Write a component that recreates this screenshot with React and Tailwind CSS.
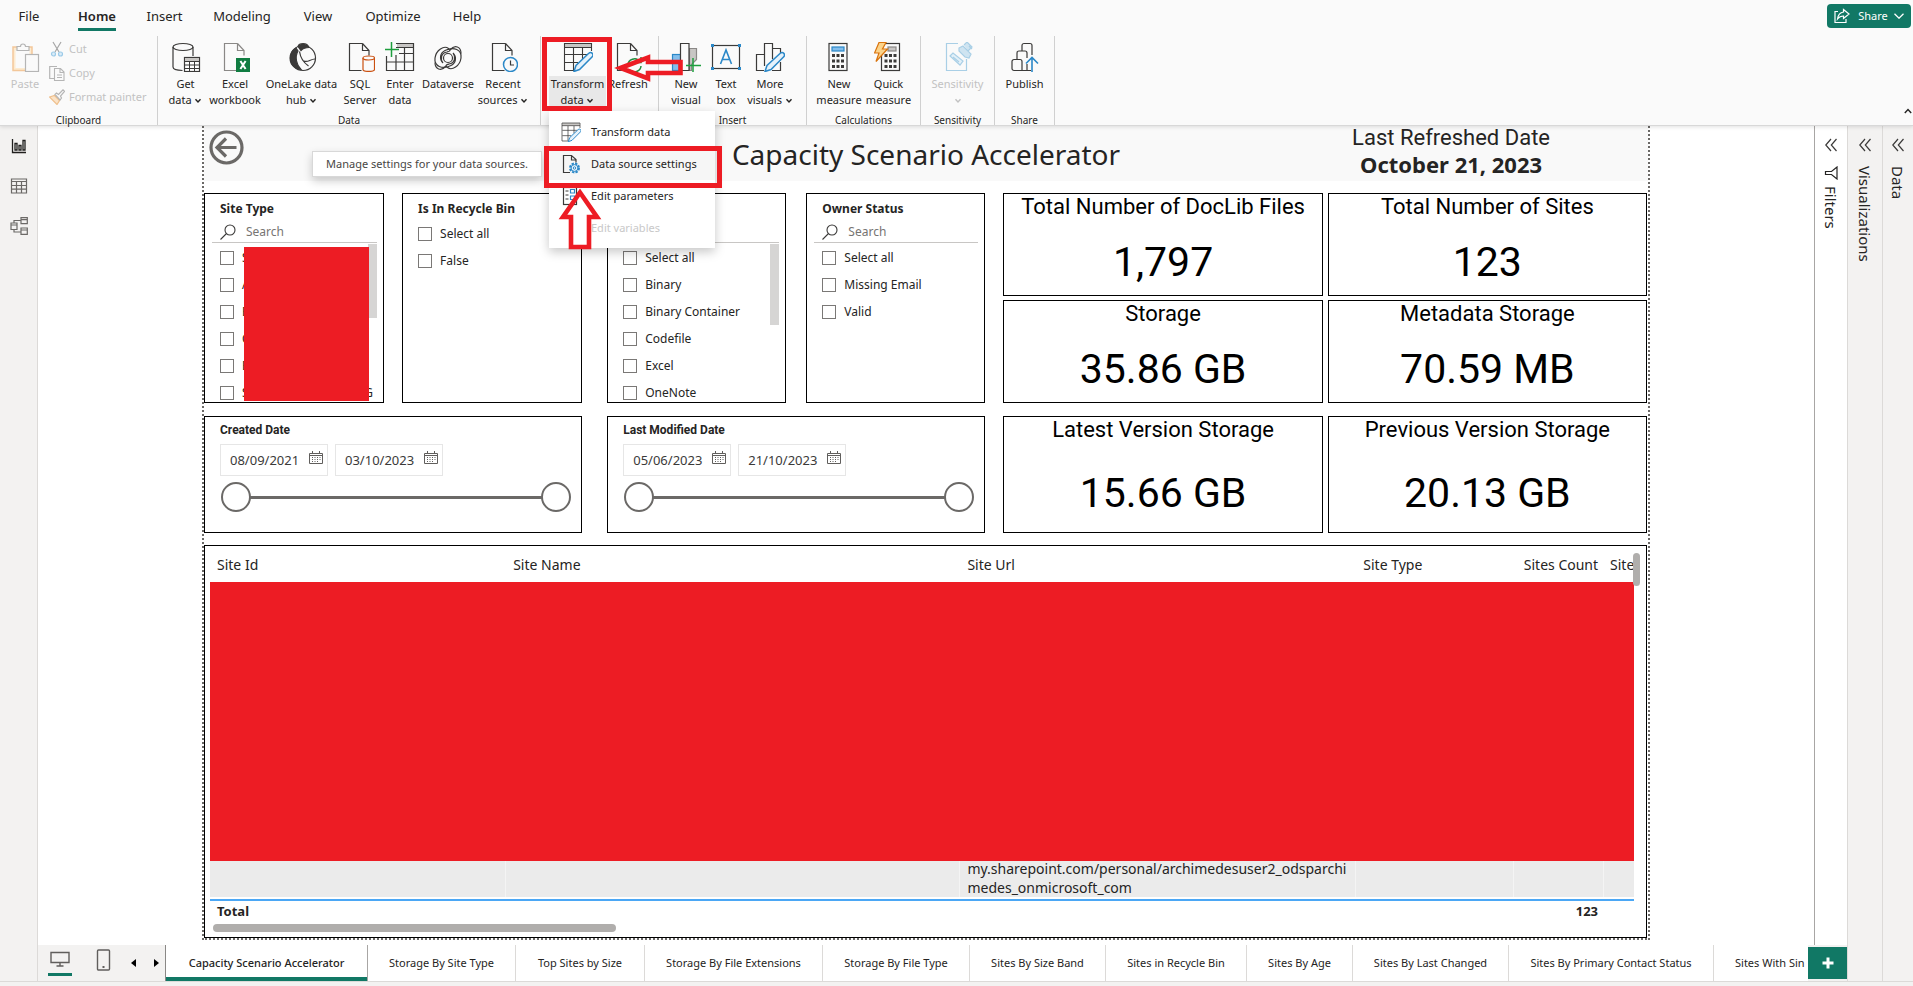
import React from 'react';

const ui = "font-['Noto_Sans','Open_Sans',sans-serif]";
const din = "font-['Roboto','Inter',sans-serif]";

/* ---------- ribbon icons, drawn on a 30 x 30 grid ---------- */

function Icon({ children, size = 'size-[30px]', box = '0 0 30 30' }) {
  return (
    <svg className={`${size} shrink-0`} viewBox={box} fill="none" stroke="#3b3a39" strokeWidth="1.2" aria-hidden="true">
      {children}
    </svg>
  );
}

const DocShape = ({ stroke = '#3b3a39' }) => (
  <path d="M17.5 1.5H4.5v27h12M17.5 1.5l6.500 7v5M17.5 1.500v7h6.500" stroke={stroke} />
);

const PasteIcon = () => (
  <Icon>
    <rect x="3" y="5" width="19" height="23.500" fill="#fdebd0" stroke="#f3c79a" strokeWidth="1.500" />
    <rect x="5.500" y="8" width="14" height="18" fill="#fafafa" stroke="none" />
    <path d="M7 8.500V4.500h3.500a2.500 2.500 0 0 1 5 0H19v4z" stroke="#b5b5b5" fill="#fafafa" />
    <rect x="15.500" y="12.500" width="13" height="17" stroke="#b5b5b5" fill="#fafafa" />
  </Icon>
);
const CutIcon = () => (
  <Icon size="size-4" box="0 0 16 16">
    <path d="M4 1l6 10M12 1L6 11" stroke="#a6a6a6" />
    <circle cx="4.500" cy="13" r="2" stroke="#9ccbe8" fill="#dcecf7" />
    <circle cx="11.500" cy="13" r="2" stroke="#9ccbe8" fill="#dcecf7" />
  </Icon>
);
const CopyIcon = () => (
  <Icon size="size-4" box="0 0 16 16">
    <path d="M5 13.500H.700V1.500H8" stroke="#b5b5b5" />
    <path d="M5.500 3.500h6l3.500 3.500v8.500H5.500zM11 3.500v4h4M8 10h5M8 12.500h5" stroke="#b5b5b5" strokeWidth="1.100" />
  </Icon>
);
const PainterIcon = () => (
  <Icon size="size-4" box="0 0 16 16">
    <path d="M.500 8l5-1.500 5 5L8 15.500z" fill="#fbe3c7" stroke="#efc08d" />
    <path d="M6 5.500l1.500-1.500 2 1.500L14 .800l1.500 1.500L11.500 7l1 2-1.500 2z" stroke="#b5b5b5" fill="#fafafa" />
  </Icon>
);
const GetDataIcon = () => (
  <Icon>
    <ellipse cx="12" cy="5" rx="10" ry="3.500" />
    <path d="M2 5v20c0 1.800 3.500 3.300 9.500 3.500M22 5v9" />
    <rect x="13.500" y="15.500" width="15" height="14" fill="#fff" />
    <path d="M13.500 19.500h15M13.500 23h15M13.500 26.500h15M18.500 19v10.500M23.500 19v10.500" strokeWidth="1" />
    <rect x="14" y="16" width="14" height="3" fill="#c8c6c4" stroke="none" />
  </Icon>
);
const ExcelIcon = () => (
  <Icon>
    <DocShape stroke="#8a8886" />
    <rect x="16" y="16" width="14" height="14" fill="#107c41" stroke="none" />
    <path d="M20.400 19l5.200 8M25.600 19l-5.200 8" stroke="#fff" strokeWidth="2" />
  </Icon>
);
const OneLakeIcon = () => (
  <Icon>
    <circle cx="16" cy="16" r="12.500" />
    <path d="M11 4.500c1-3.500 9-4.500 11 1-3 0-6 1-8 3z" fill="#3b3a39" />
    <path d="M9 6c-8 5-7.500 15-1 19.500 2 1.500 4 2 6 2C9.500 23 7.500 15 11 9z" fill="#3b3a39" />
    <path d="M12.500 9.500c1 7 4 11 9 14.500M17 19c4 2 6-2 11-2" />
  </Icon>
);
const SqlIcon = () => (
  <Icon>
    <DocShape />
    <g stroke="#ca5010">
      <path d="M18 16v11.500c0 2.600 11.500 2.600 11.500 0V16" fill="#fafafa" />
      <ellipse cx="23.750" cy="16" rx="5.750" ry="2" fill="#fafafa" />
    </g>
  </Icon>
);
const EnterDataIcon = () => (
  <Icon>
    <rect x="12" y="1.500" width="16" height="4" fill="#c8c6c4" stroke="none" />
    <path d="M11 1.500h17.500v27h-27V14M28.500 5.500H11M14 11.500h14M2 20h26M11 13v15M19.500 6v22" />
    <path d="M6.500 0v15M0 7.500h14" stroke="#1e9e3e" strokeWidth="1.500" />
  </Icon>
);
const DataverseIcon = () => (
  <Icon>
    <circle cx="15" cy="16" r="4.500" />
    <path d="M20 11c4 4 3 10-2 12.500C9 28 1 24 2 16 3 8 11 3 15.500 6.500c3 2.500.500 3-1.500 3.500-6 1-7 7-4 11M10 21c-4-4-3-10 2-12.500C21 4 29 8 28 16c-1 8-9 13-13.500 9.500-3-2.500-.500-3 1.500-3.500 6-1 7-7 4-11" />
    <path d="M17 8C22 2 28 5 28 11.500M13 24C8 30 2 27 2 20.500" />
  </Icon>
);
const RecentIcon = () => (
  <Icon>
    <DocShape />
    <circle cx="22.500" cy="22.500" r="7" stroke="#2b88c8" fill="#fafafa" strokeWidth="1.500" />
    <path d="M22.500 18.500V23H26" stroke="#3b3a39" />
  </Icon>
);
const TransformIcon = ({ size }) => (
  <Icon size={size}>
    <rect x="2" y="1.500" width="26" height="4" fill="#c8c6c4" stroke="none" />
    <path d="M12 28.500H1.500v-27h27V9M1.500 5.500h27M2 12.500h22M2 20.500h13M10.500 6v22M19.500 6v11" strokeWidth="1.100" />
    <path d="M11 29.500l2-6L25.500 11.500c3-2.500 6 1 3.500 3.500L16.500 27.500z" fill="#e6f2fb" stroke="#2b88c8" strokeWidth="1.500" />
  </Icon>
);
const RefreshIcon = () => (
  <Icon>
    <DocShape />
    <path d="M15 24a6.500 6.500 0 0 1 12-4M28 15v5.500h-5.500M28 24a6.500 6.500 0 0 1-11 4" stroke="#1e8e3e" strokeWidth="1.500" />
  </Icon>
);
const NewVisualIcon = () => (
  <Icon>
    <rect x="1.500" y="12.500" width="8" height="16" fill="#83beec" stroke="#2b88c8" />
    <path d="M18.500 6.500h7v11l-5 5v6h-2z" fill="#c8c6c4" stroke="#8a8886" />
    <path d="M9.500 28.500v-27h8.500v27z" fill="#fafafa" />
    <path d="M22 16v14M15 23.500h15" stroke="#1e9e3e" strokeWidth="1.500" />
  </Icon>
);
const TextBoxIcon = () => (
  <Icon>
    <rect x="1.500" y="3.500" width="27" height="23" />
    <path d="M9.500 22L15 8l5.500 14M11.300 17.500h7.400" stroke="#2b88c8" strokeWidth="1.600" />
    <g fill="#2b88c8" stroke="none">
      <rect x="0" y="2" width="3" height="3" />
      <rect x="27" y="2" width="3" height="3" />
      <rect x="0" y="25" width="3" height="3" />
      <rect x="27" y="25" width="3" height="3" />
    </g>
  </Icon>
);
const MoreVisualsIcon = () => (
  <Icon>
    <path d="M9 28.500H1.500V12.500h8M9.500 24V1.500h8V17M18 6.500h7.500V11M17 28.500h8.500V20" />
    <path d="M10 29.500l2-6L25 11.500c3-2.500 6 1 3.500 3.500L16 27.500z" fill="#e6f2fb" stroke="#2b88c8" strokeWidth="1.500" />
  </Icon>
);
const Keypad = ({ x }) => (
  <g>
    <rect x={x} y="1.500" width="18" height="27" />
    {[12, 17.500, 23].map((y) =>
      [3, 7.500, 12].map((dx) => <rect key={`${y}-${dx}`} x={x + dx} y={y} width="3" height="3" fill="#3b3a39" stroke="none" />)
    )}
  </g>
);
const NewMeasureIcon = () => (
  <Icon>
    <Keypad x={5} />
    <rect x="8" y="5" width="12" height="4" fill="#83beec" stroke="#2b88c8" />
  </Icon>
);
const QuickMeasureIcon = () => (
  <Icon>
    <Keypad x={7.500} />
    <rect x="14" y="5" width="8" height="4" fill="#c8c6c4" stroke="#8a8886" />
    <path d="M5 .500h7L8.500 7h5L2 19.500l3-8.500H.500z" fill="#fbd38a" stroke="#d9730d" />
  </Icon>
);
const SensitivityIcon = () => (
  <Icon>
    <g stroke="#a9cfe6">
      <path d="M15 1.500H3.500v27h20V17" />
      <path d="M7 14l3-3 10 8-3 4z" fill="#e3f0f8" />
      <path d="M10 15l6 5" />
      <path d="M16 6l4-2 8 8-2 4-4-1-6-6zM21 3l3-3 5 5-4 4M26 4l3 3" fill="#cfe4f1" />
    </g>
  </Icon>
);
const PublishIcon = () => (
  <Icon>
    <path d="M21 28.500H4a2 2 0 0 1-2-2v-7a2 2 0 0 1 2-2h6a2 2 0 0 1 2 2v9M7 17v-6a2 2 0 0 1 2-2h6a2 2 0 0 1 2 2v5M12 9V3.500a2 2 0 0 1 2-2h6a2 2 0 0 1 2 2V13M17 22v6" />
    <path d="M22 30V16M16 21.500l6-6 6 6" stroke="#2b88c8" strokeWidth="1.600" />
  </Icon>
);

const Caret = ({ up }) => (
  <svg className="inline-block h-1.5 w-2 align-middle" viewBox="0 0 8 6" fill="none" stroke="currentColor" strokeWidth="1.400" aria-hidden="true">
    <path d={up ? 'M.800 5L4 1.500 7.200 5' : 'M1.500 1.200L4 4l2.500-2.800'} />
  </svg>
);

/* ---------- ribbon ---------- */

function RibbonButton({ icon, lines, width, caret, disabled, active }) {
  return (
    <button
      type="button"
      disabled={disabled}
      className={`${width} flex shrink-0 flex-col items-center pt-1.5 text-[11px] leading-4 ${disabled ? 'text-[#c2c2c2]' : 'text-[#252423]'}`}
    >
      {icon}
      <span className={`mt-1 block h-8 w-full whitespace-nowrap ${active ? 'bg-[#e8e8e8]' : ''}`}>
        {lines.map((line, i) => (
          <span key={i} className="-mx-2 block">
            {line}
            {caret && i === lines.length - 1 ? <> <Caret /></> : null}
          </span>
        ))}
      </span>
    </button>
  );
}

function RibbonGroup({ label, pad = '', children }) {
  return (
    <div className="relative flex shrink-0 flex-col border-r border-[#d0d0d0] text-center">
      <div className={`flex h-[77px] ${pad}`}>{children}</div>
      <div className="h-3 text-[10px] leading-[14px] text-[#252423]">{label}</div>
    </div>
  );
}

const menuItemClass = 'flex h-8 w-full items-center gap-2.5 pl-3 text-left text-[11px]';

function TransformMenu() {
  return (
    <div className="absolute top-[75px] left-0 w-[166px] bg-white pt-[5px] pb-1 text-[#252423] shadow-[0_4px_10px_rgba(0,0,0,0.22)]" role="menu">
      <button type="button" role="menuitem" className={menuItemClass}>
        <TransformIcon size="size-5" />Transform data
      </button>
      <button type="button" role="menuitem" className={`${menuItemClass} bg-[#f6f6f6]`}>
        <Icon size="size-5" box="0 0 20 20">
          <path d="M9 18.500H2.500v-17h8l4.500 4v3M10.500 1.500v4.500H15" />
          <circle cx="13.500" cy="14" r="4.200" stroke="#2b88c8" strokeDasharray="2.200 1.100" strokeWidth="2.500" />
          <circle cx="13.500" cy="14" r="3.400" stroke="#2b88c8" fill="#e6f2fb" strokeWidth="1" />
          <circle cx="13.500" cy="14" r="1.200" stroke="#2b88c8" strokeWidth="1" fill="#fff" />
        </Icon>
        Data source settings
      </button>
      <button type="button" role="menuitem" className={menuItemClass}>
        <Icon size="size-5" box="0 0 20 20">
          <rect x="2.500" y="1.500" width="13" height="17" />
          <path d="M4.500 5h3M4.500 9h3M4.500 13h3" strokeWidth="1" />
          <path d="M9.500 3.500h4v3.500h-4zM9.500 10h4v3.500h-4z" stroke="#2b88c8" />
        </Icon>
        Edit parameters
      </button>
      <button type="button" role="menuitem" disabled className={`${menuItemClass} text-[#c8c8c8]`}>
        <span className="w-5" />Edit variables
      </button>
    </div>
  );
}

function TransformCallouts() {
  return (
    <div className="pointer-events-none">
      <div className="absolute top-px -left-[7px] h-[74px] w-[70px] border-5 border-[#ed1c24]" />
      <div className="absolute top-[110px] -left-[5px] h-[42px] w-[178px] border-5 border-[#ed1c24]" />
      <svg className="absolute top-[18px] left-[65px] h-[28px] w-[70px]" viewBox="0 0 70 28" fill="none" stroke="#ed1c24" strokeWidth="4.600" aria-hidden="true">
        <path d="M6.500 14L34 3.500V8h32.500v11H34v5.500z" />
      </svg>
      <svg className="absolute top-[150px] left-2 h-[64px] w-[46px]" viewBox="0 0 46 64" fill="none" stroke="#ed1c24" strokeWidth="4.600" aria-hidden="true">
        <path d="M23 6.500L40 31h-8v30H14V31H6z" />
      </svg>
    </div>
  );
}

const ribbonTabs = [
  ['File', 'w-[34px]'], ['Home', 'w-[38px]'], ['Insert', 'w-[33px]'], ['Modeling', 'w-[58px]'],
  ['View', 'w-[30px]'], ['Optimize', 'w-[56px]'], ['Help', 'w-[28px]'],
];

function Ribbon() {
  return (
    <header className="relative z-20 border-b border-[#d8d8d8] bg-[#fafafa] shadow-[0_1px_4px_rgba(0,0,0,0.12)]">
      <div className="flex h-9 items-start justify-between">
        <nav className="flex gap-8 pt-1 pl-3 text-[13px] leading-6 text-[#252423]">
          {ribbonTabs.map(([name, width]) => (
            <button key={name} type="button" className={`${width} flex h-[27px] justify-center ${name === 'Home' ? 'border-b-3 border-[#117865] font-semibold' : ''}`}>
              {name}
            </button>
          ))}
        </nav>
        <button type="button" className="mt-1 mr-0.5 flex h-6 w-[84px] items-center justify-center gap-2 rounded bg-[#117865] text-[11px] text-white">
          <svg className="size-4" viewBox="0 0 16 16" fill="none" stroke="#fff" strokeWidth="1.200" aria-hidden="true">
            <path d="M4 3.500H1v11h11V11M9.500 1.500L15 6l-5.500 4.500V8C7 8 5 9 3.500 11c.500-4 2.500-6.500 6-7z" />
          </svg>
          <span className="flex items-center gap-1.5">
            Share
            <svg className="h-1.5 w-2.5" viewBox="0 0 10 6" fill="none" stroke="#fff" strokeWidth="1.300" aria-hidden="true"><path d="M.500.800L5 5.200 9.500.800" /></svg>
          </span>
        </button>
      </div>
      <div className="flex h-[89px] items-start">
        <RibbonGroup label="Clipboard" pad="w-[157px] pl-[5px]">
          <RibbonButton icon={<PasteIcon />} lines={['Paste']} width="w-10" disabled />
          <div className="flex flex-col pt-px pl-1 text-[11px] text-[#c2c2c2]">
            {[['Cut', <CutIcon />], ['Copy', <CopyIcon />], ['Format painter', <PainterIcon />]].map(([name, icon]) => (
              <button key={name} type="button" disabled className="flex h-6 items-center gap-1 whitespace-nowrap">{icon}{name}</button>
            ))}
          </div>
        </RibbonGroup>
        <RibbonGroup label="Data" pad="pr-[9px] pl-[5px]">
          <RibbonButton icon={<GetDataIcon />} lines={['Get', 'data']} width="w-[45px]" caret />
          <RibbonButton icon={<ExcelIcon />} lines={['Excel', 'workbook']} width="w-[54px]" />
          <RibbonButton icon={<OneLakeIcon />} lines={['OneLake data', 'hub']} width="w-[79px]" caret />
          <RibbonButton icon={<SqlIcon />} lines={['SQL', 'Server']} width="w-[38px]" />
          <RibbonButton icon={<EnterDataIcon />} lines={['Enter', 'data']} width="w-[42px]" />
          <RibbonButton icon={<DataverseIcon />} lines={['Dataverse']} width="w-[54px]" />
          <RibbonButton icon={<RecentIcon />} lines={['Recent', 'sources']} width="w-[56px]" caret />
        </RibbonGroup>
        <RibbonGroup label="" pad="px-2">
          <div className="relative z-10">
            <RibbonButton icon={<TransformIcon />} lines={['Transform', 'data']} width="w-[57px]" caret active />
            <div className="absolute top-[115px] right-full mr-[7px] flex h-[26px] items-center border border-[#d8d8d8] bg-white px-[13px] text-[11px] whitespace-nowrap text-[#484644] shadow-[0_4px_10px_rgba(0,0,0,0.2)]" role="tooltip">
              Manage settings for your data sources.
            </div>
            <TransformMenu />
            <TransformCallouts />
          </div>
          <RibbonButton icon={<RefreshIcon />} lines={['Refresh']} width="w-11" />
        </RibbonGroup>
        <RibbonGroup label="Insert" pad="pr-3 pl-[7px]">
          <RibbonButton icon={<NewVisualIcon />} lines={['New', 'visual']} width="w-10" />
          <RibbonButton icon={<TextBoxIcon />} lines={['Text', 'box']} width="w-10" />
          <RibbonButton icon={<MoreVisualsIcon />} lines={['More', 'visuals']} width="w-12" caret />
        </RibbonGroup>
        <RibbonGroup label="Calculations" pad="px-[7px]">
          <RibbonButton icon={<NewMeasureIcon />} lines={['New', 'measure']} width="w-[50px]" />
          <RibbonButton icon={<QuickMeasureIcon />} lines={['Quick', 'measure']} width="w-[49px]" />
        </RibbonGroup>
        <RibbonGroup label="Sensitivity" pad="px-2">
          <RibbonButton icon={<SensitivityIcon />} lines={['Sensitivity', '']} width="w-[57px]" caret disabled />
        </RibbonGroup>
        <RibbonGroup label="Share" pad="px-2">
          <RibbonButton icon={<PublishIcon />} lines={['Publish']} width="w-[43px]" />
        </RibbonGroup>
        <button type="button" aria-label="Collapse ribbon" className="mr-px ml-auto self-end pb-1 text-[#252423]"><Caret up /></button>
      </div>
    </header>
  );
}

/* ---------- report visuals ---------- */

const card = 'border border-black bg-white';

function Slicer({ title, id, items, search, scroll, redacted }) {
  return (
    <section className={`${card} relative flex min-h-0 flex-col overflow-hidden pl-[15px] text-[#252423]`}>
      <h2 className="mt-[7px] h-4 shrink-0 text-[12px] leading-4 font-bold">{title}</h2>
      {search !== undefined && (
        <label className="mt-1 mr-1.5 -ml-2 flex h-[22px] shrink-0 items-center gap-2.5 border-b border-[#c8c6c4] pl-2">
          <svg className="size-4 shrink-0" viewBox="0 0 16 16" fill="none" stroke="#3b3a39" strokeWidth="1.100" aria-hidden="true">
            <circle cx="10" cy="6" r="5" /><path d="M6.500 9.500L.500 15.500" />
          </svg>
          <input type="text" aria-label="Search values" placeholder={search} className="w-full min-w-0 text-[12px] outline-none placeholder:text-[#767472]" />
        </label>
      )}
      <ul className={search !== undefined ? 'mt-px' : 'mt-[3px]'}>
        {items.map((item, i) => (
          <li key={i} className="flex h-[27px] items-center gap-2 text-[12px]">
            <input id={`${id}-${i}`} type="checkbox" className="size-3.5 shrink-0 appearance-none border border-[#7a7876] bg-white" />
            <label htmlFor={`${id}-${i}`} className="whitespace-nowrap">{item}</label>
          </li>
        ))}
      </ul>
      {scroll && <div className={`absolute top-[50px] right-1.5 w-[9px] bg-[#d6d5d4] ${scroll}`} />}
      {redacted && (
        <div className="absolute top-[53px] right-[14px] bottom-px left-[39px] bg-[#ed1c24]" />
      )}
      {redacted && <span className="absolute right-2.5 bottom-0 h-[18px] w-1 overflow-hidden text-[12px]"><span className="float-right">G</span></span>}
    </section>
  );
}

function CalendarIcon() {
  return (
    <svg className="size-3.5" viewBox="0 0 14 14" fill="none" stroke="#605e5c" strokeWidth="1" aria-hidden="true">
      <path d="M.500 2.500h13v10H.500zM.500 4.500h13M3.500 0v3M10.500 0v3" />
      <path d="M3 6.500h9M3 8.500h9M3 10.500h7" strokeDasharray="1 1.500" />
    </svg>
  );
}

const thumb =
  'pointer-events-none absolute inset-0 w-full appearance-none bg-transparent [&::-webkit-slider-thumb]:pointer-events-auto [&::-webkit-slider-thumb]:size-[30px] [&::-webkit-slider-thumb]:appearance-none [&::-webkit-slider-thumb]:rounded-full [&::-webkit-slider-thumb]:border-2 [&::-webkit-slider-thumb]:border-solid [&::-webkit-slider-thumb]:border-[#6b6967] [&::-webkit-slider-thumb]:bg-white';

function DateSlicer({ title, from, to }) {
  return (
    <section className={`${card} h-[117px] pr-2.5 pl-[15px]`}>
      <h2 className={`${din} mt-[5px] text-[12px] leading-4 font-bold text-[#252423]`}>{title}</h2>
      <div className="mt-1.5 flex gap-[7px]">
        {[from, to].map((value, i) => (
          <div key={value} className="flex h-8 w-[108px] items-start justify-between border border-[#e6e6e6] pr-1 pl-[9px]">
            <input aria-label={`${title} ${i ? 'to' : 'from'}`} defaultValue={value} className="h-[30px] w-[76px] text-[13px] text-[#3b3a39] outline-none" />
            <button type="button" aria-label="Open calendar" className="pt-1.5"><CalendarIcon /></button>
          </div>
        ))}
      </div>
      <div className="relative mt-1.5 ml-px flex h-[30px] items-center px-4">
        <div className="h-[3px] w-full bg-[#6b6967]" />
        <input type="range" aria-label={`${title} start`} defaultValue={0} className={thumb} />
        <input type="range" aria-label={`${title} end`} defaultValue={100} className={thumb} />
      </div>
    </section>
  );
}

function Kpi({ title, value, gap = 'mt-3' }) {
  return (
    <section className={`${card} ${din} overflow-hidden text-center text-black`}>
      <h2 className="mt-px text-[22px] leading-6 whitespace-nowrap">{title}</h2>
      <p className={`${gap} text-[41px] leading-[62px] whitespace-nowrap`}>{value}</p>
    </section>
  );
}

function SitesTable() {
  const cell = 'border-r border-[#f4f4f4] bg-[#ebebeb]';
  return (
    <section className={`${card} relative h-[393px] pr-3 pl-[5px]`}>
      <table className="w-full table-fixed border-separate border-spacing-0 text-left text-[14px] text-[#252423]">
        <colgroup>
          <col className="w-[20.8%]" /><col className="w-[31.9%]" /><col className="w-[27.8%]" />
          <col className="w-[11.1%]" /><col className="w-[6.3%]" /><col className="w-[2.1%]" />
        </colgroup>
        <thead>
          <tr className="h-9 whitespace-nowrap">
            {['Site Id', 'Site Name', 'Site Url', 'Site Type'].map((name) => (
              <th key={name} className="p-0 pl-[7px] font-normal">{name}</th>
            ))}
            <th className="p-0 pr-1.5 text-right font-normal"><span className="-ml-2">Sites Count</span></th>
            <th className="overflow-hidden p-0 pl-1.5 font-normal">Site</th>
          </tr>
        </thead>
        <tbody>
          <tr><td colSpan={6} className="relative h-[277px] bg-[#ed1c24] p-0 shadow-[0_2px_0_#ed1c24]" /></tr>
          <tr className="h-[38px] leading-[19px]">
            <td className={cell} />
            <td className={cell} />
            <td className={`${cell} p-0 pl-[7px] whitespace-nowrap`}>my.sharepoint.com/personal/archimedesuser2_odsparchi<br />medes_onmicrosoft_com</td>
            <td className={cell} />
            <td className={cell} />
            <td className="bg-[#ebebeb]" />
          </tr>
          <tr><td colSpan={6} className="h-0.5 p-0" /></tr>
        </tbody>
        <tfoot>
          <tr className="h-6 text-[13px] font-bold">
            <th className="border-t-2 border-[#4ba7f5] p-0 pl-[7px]">Total</th>
            <td className="border-t-2 border-[#4ba7f5] p-0" colSpan={3} />
            <td className="border-t-2 border-[#4ba7f5] p-0 pr-1.5 text-right">123</td>
            <td className="border-t-2 border-[#4ba7f5] p-0" />
          </tr>
        </tfoot>
      </table>
      <div className="absolute top-[7px] right-1.5 h-[33px] w-[7px] rounded-full bg-[#b0aeac]" />
      <div className="absolute bottom-[5px] left-2 h-2 w-[28%] rounded-full bg-[#b0aeac]" />
    </section>
  );
}

function ReportPage() {
  return (
    <div className="border-x-2 border-b-2 border-dotted border-[#6b6967]">
      <div className="relative grid h-[55px] grid-cols-[1fr_auto_1fr] bg-[#f9f9f9] text-[#252423]">
        <button type="button" aria-label="Back" className="mt-1 ml-[5px] self-start justify-self-start">
          <svg className="size-[35px]" viewBox="0 0 35 35" fill="none" stroke="#6b6967" strokeWidth="3.200" aria-hidden="true">
            <circle cx="17.500" cy="17.500" r="15.500" /><path d="M27.500 17.500H8M17 8.500l-9 9 9 9" />
          </svg>
        </button>
        <h1 className="mt-2 text-[28px] leading-10 whitespace-nowrap">Capacity Scenario Accelerator</h1>
        <div className="justify-self-end pr-[98px] text-center">
          <div className={`${din} text-[22px] leading-6 whitespace-nowrap`}>Last Refreshed Date</div>
          <div className="text-[22px] leading-7 font-bold whitespace-nowrap">October 21, 2023</div>
        </div>
      </div>
      <div className="mt-3 flex flex-col gap-[13px] pr-px">
        <div className="flex h-[210px] gap-[18px]">
          <div className="grid min-w-0 flex-[782] grid-cols-2 grid-rows-1 gap-[25px]">
            <div className="grid min-h-0 grid-cols-2 grid-rows-1 gap-[18px]">
              <Slicer id="type" title="Site Type" search="Search" items={['S', 'A', 'E', 'C', 'E', 'S']} scroll="h-[74px]" redacted />
              <Slicer id="bin" title="Is In Recycle Bin" items={['Select all', 'False']} />
            </div>
            <div className="grid min-h-0 grid-cols-2 grid-rows-1 gap-5">
              <Slicer id="kind" title="" search="" items={['Select all', 'Binary', 'Binary Container', 'Codefile', 'Excel', 'OneNote']} scroll="h-[81px]" />
              <Slicer id="owner" title="Owner Status" search="Search" items={['Select all', 'Missing Email', 'Valid']} />
            </div>
          </div>
          <div className="grid min-w-0 flex-[644] grid-cols-2 grid-rows-2 gap-x-[5px] gap-y-1">
            <Kpi title="Total Number of DocLib Files" value="1,797" />
            <Kpi title="Total Number of Sites" value="123" />
            <Kpi title="Storage" value="35.86 GB" />
            <Kpi title="Metadata Storage" value="70.59 MB" />
          </div>
        </div>
        <div className="-mb-px flex gap-[18px]">
          <div className="grid min-w-0 flex-[782] grid-cols-2 gap-[25px]">
            <DateSlicer title="Created Date" from="08/09/2021" to="03/10/2023" />
            <DateSlicer title="Last Modified Date" from="05/06/2023" to="21/10/2023" />
          </div>
          <div className="grid min-w-0 flex-[644] grid-cols-2 gap-[5px]">
            <Kpi title="Latest Version Storage" value="15.66 GB" gap="mt-5" />
            <Kpi title="Previous Version Storage" value="20.13 GB" gap="mt-5" />
          </div>
        </div>
        <SitesTable />
      </div>
    </div>
  );
}

/* ---------- side rails and page tabs ---------- */

function ViewRail() {
  const svg = 'size-[18px]';
  return (
    <nav className="flex w-[38px] shrink-0 flex-col items-center gap-[22px] border-r border-[#dcdad8] bg-[#f3f2f1] pt-[11px]">
      <button type="button" aria-label="Report view" className="h-[18px]">
        <svg className={svg} viewBox="0 0 18 18" fill="none" stroke="#201f1e" strokeWidth="1.300" aria-hidden="true">
          <path d="M2.500 2v13.500H16M5 6.500h2v6.500H5zM9 8.500h2V13H9zM13 3.500h2V13h-2z" />
        </svg>
      </button>
      <button type="button" aria-label="Table view" className="h-[18px]">
        <svg className={svg} viewBox="0 0 18 18" fill="none" stroke="#6b6967" strokeWidth="1.200" aria-hidden="true">
          <path d="M1.500 2h15v14h-15zM1.500 4.500h15M1.500 8.500h15M1.500 12.200h15M6.500 4v12M11.500 4v12" />
        </svg>
      </button>
      <button type="button" aria-label="Model view" className="h-[18px]">
        <svg className={svg} viewBox="0 0 18 18" fill="none" stroke="#6b6967" strokeWidth="1.200" aria-hidden="true">
          <path d="M1 6h6v6.500H1zM1 8h6M11 .700h6.300v6H11zM11 2.700h6.300M11 11h6.300v6.300H11zM11 13h6.300M4 6V3.500h7M4 12.500V15h7" />
        </svg>
      </button>
    </nav>
  );
}

function SidePane({ name, className, filter }) {
  return (
    <aside className={`${className} flex shrink-0 flex-col items-center pt-3 text-[#252423]`}>
      <button type="button" aria-label={`Expand ${name}`}>
        <svg className="h-3.5 w-3" viewBox="0 0 12 14" fill="none" stroke="#3b3a39" strokeWidth="1.200" aria-hidden="true">
          <path d="M6 1L.800 7 6 13M11.500 1L6.300 7l5.200 6" />
        </svg>
      </button>
      {filter && (
        <svg className="mt-3.5 mb-1.5 size-3.5" viewBox="0 0 14 14" fill="none" stroke="#252423" strokeWidth="1.200" aria-hidden="true">
          <path d="M13 1v12L7.500 8.500H1.500v-3h6z" />
        </svg>
      )}
      <h2 className={`text-[15px] leading-5 [writing-mode:vertical-rl] ${filter ? '' : 'mt-3.5'}`}>{name}</h2>
    </aside>
  );
}

const pageTabs = [
  ['Capacity Scenario Accelerator', 'w-[203px]'], ['Storage By Site Type', 'w-[148px]'], ['Top Sites by Size', 'w-[129px]'],
  ['Storage By File Extensions', 'w-[178px]'], ['Storage By File Type', 'w-[147px]'], ['Sites By Size Band', 'w-[136px]'],
  ['Sites in Recycle Bin', 'w-[141px]'], ['Sites By Age', 'w-[106px]'], ['Sites By Last Changed', 'w-[156px]'],
  ['Sites By Primary Contact Status', 'w-[205px]'],
];

function PageTabs() {
  return (
    <div className="flex h-9 items-stretch overflow-hidden bg-[#f3f2f1] text-[11px] text-[#252423]">
      <div className="flex w-[127px] shrink-0 items-start pl-2.5">
        <button type="button" aria-label="Desktop layout" className="flex h-[31px] w-6 flex-col items-center justify-between border-b-3 border-[#117865] pt-1.5">
          <svg className="h-4 w-5" viewBox="0 0 20 16" fill="none" stroke="#605e5c" strokeWidth="1.400" aria-hidden="true"><path d="M1 1.500h18v10H1zM10 11.500V15M6.500 15h7" /></svg>
        </button>
        <button type="button" aria-label="Mobile layout" className="mt-1 ml-6">
          <svg className="h-[22px] w-[15px]" viewBox="0 0 15 22" fill="none" stroke="#605e5c" strokeWidth="1.400" aria-hidden="true"><rect x="1.500" y="1" width="12" height="20" rx="1" /><path d="M6.500 18h2" strokeWidth="2" /></svg>
        </button>
        <button type="button" aria-label="Previous page" className="mt-3.5 ml-5"><svg className="h-2 w-1.5" viewBox="0 0 6 8" aria-hidden="true"><path d="M5 0v8L0 4z" /></svg></button>
        <button type="button" aria-label="Next page" className="mt-3.5 ml-4"><svg className="h-2 w-1.5" viewBox="0 0 6 8" aria-hidden="true"><path d="M1 0v8l5-4z" /></svg></button>
      </div>
      {pageTabs.map(([name, width], i) => (
        <button
          key={name}
          type="button"
          className={`${width} shrink-0 border-r bg-white whitespace-nowrap ${i === 0 ? 'border-r-[#a8a6a4] border-l border-l-[#8a8886] font-medium shadow-[inset_0_-4px_0_#117865]' : 'border-[#dcdad8]'}`}
        >
          {name}
        </button>
      ))}
      <button type="button" className="min-w-0 flex-1 overflow-hidden bg-white pl-[21px] text-left whitespace-nowrap">Sites With Sin</button>
      <button type="button" aria-label="New page" className="my-0.5 flex w-[39px] shrink-0 items-center justify-center bg-[#117865]">
        <svg className="size-3" viewBox="0 0 12 12" stroke="#fff" strokeWidth="3" aria-hidden="true"><path d="M6 .500v11M.500 6h11" /></svg>
      </button>
    </div>
  );
}

export default function App() {
  return (
    <div className={`${ui} flex min-h-screen flex-col overflow-hidden bg-white`}>
      <Ribbon />
      <div className="flex flex-1">
        <ViewRail />
        <div className="flex min-w-0 flex-1 flex-col">
          <div className="flex flex-1">
            <main className="min-w-0 flex-1 px-[164px]"><ReportPage /></main>
            <SidePane name="Filters" filter className="w-[33px] border-l border-[#a8a6a4] bg-white" />
          </div>
          <PageTabs />
        </div>
        <SidePane name="Visualizations" className="w-[35px] border-l border-[#dcdad8] bg-[#f3f2f1]" />
        <SidePane name="Data" className="w-[31px] border-l border-[#dcdad8] bg-[#f3f2f1]" />
      </div>
      <footer className="h-[5px] border-t border-[#dcdad8] bg-[#f3f2f1]" />
    </div>
  );
}
